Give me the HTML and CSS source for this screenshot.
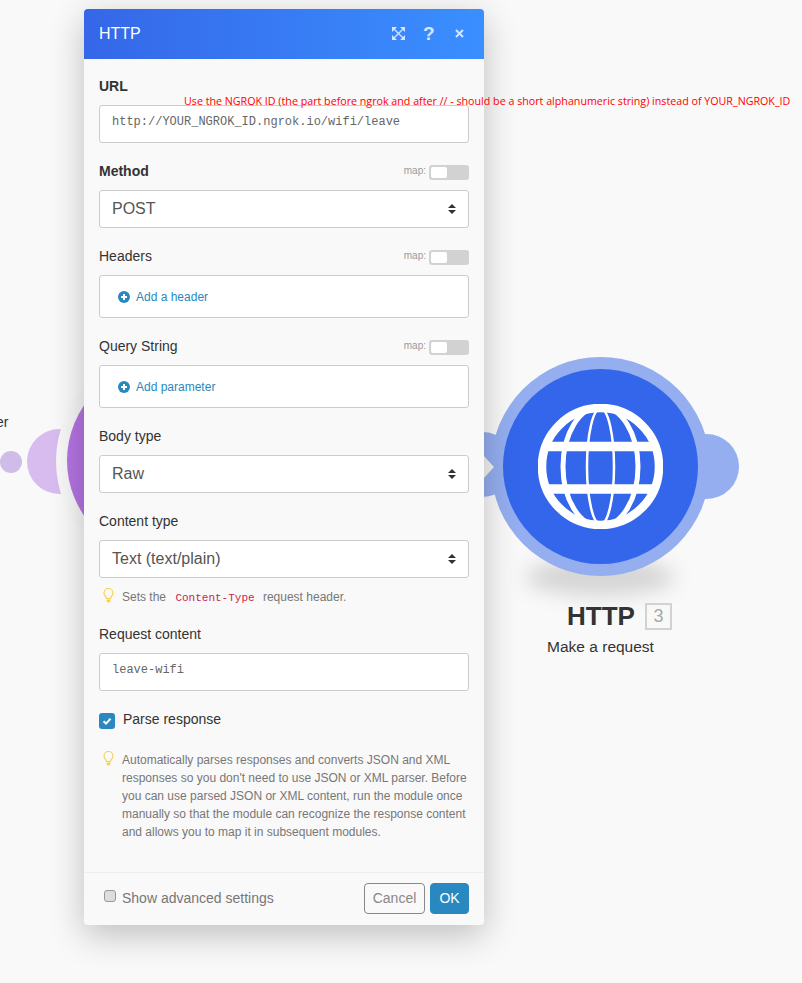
FILE: index.html
```html
<!DOCTYPE html>
<html lang="en">
<head>
<meta charset="utf-8">
<title>HTTP</title>
<link rel="stylesheet" href="styles.css">
</head>
<body>
<div class="canvas">
  <div class="node-label-cut">er</div>
  <div class="dot-purple"></div>
  <div class="lobe-purple"></div>
  <div class="ring-purple"></div>
  <div class="core-purple"></div>

  <div class="lobe-blue lobe-left"></div>
  <div class="lobe-blue lobe-right"></div>
  <div class="node-shadow"></div>
  <div class="ring-blue"></div>
  <div class="notch"></div>
  <div class="core-blue">
    <svg class="globe" viewBox="0 0 125 125" width="125" height="125" aria-hidden="true">
      <defs><clipPath id="globe-clip"><circle cx="62.5" cy="62.5" r="60"/></clipPath></defs>
      <g fill="none" stroke="#fff">
        <circle cx="62.5" cy="62.5" r="58.5" stroke-width="8.5"/>
        <g clip-path="url(#globe-clip)">
          <ellipse cx="62.5" cy="62.5" rx="37.5" ry="60" stroke-width="5"/>
          <ellipse cx="62.5" cy="62.5" rx="13.5" ry="58" stroke-width="2.5"/>
          <path d="M0 42.5H125" stroke-width="9.5"/>
          <path d="M0 85H125" stroke-width="9.5"/>
        </g>
      </g>
    </svg>
  </div>
  <div class="node-title">
    <span class="node-name">HTTP</span>
    <span class="node-id">3</span>
  </div>
  <div class="node-desc">Make a request</div>
</div>

<main class="modal">
  <header class="modal-head">
    <h1 class="modal-title">HTTP</h1>
    <div class="head-tools">
      <svg class="tool-expand" viewBox="0 0 13 13" width="13" height="13" aria-hidden="true">
        <path d="M2 2L11 11M11 2L2 11" stroke="#d6e6ff" stroke-width="1.3" fill="none"/>
        <path d="M0 0H5L0 5ZM13 0H8L13 5ZM0 13H5L0 8ZM13 13H8L13 8Z" fill="#d6e6ff"/>
      </svg>
      <span class="tool-help">?</span>
      <svg class="tool-close" viewBox="0 0 9 9" width="9" height="9" aria-hidden="true">
        <path d="M1 1L8 8M8 1L1 8" stroke="#d6e6ff" stroke-width="2" fill="none"/>
      </svg>
    </div>
  </header>

  <div class="modal-body">
    <section class="field">
      <div class="field-head"><label class="field-label strong">URL</label></div>
      <div class="control mono">http://YOUR_NGROK_ID.ngrok.io/wifi/leave</div>
    </section>

    <section class="field">
      <div class="field-head">
        <label class="field-label strong">Method</label>
        <span class="map"><span class="map-text">map:</span><span class="toggle"><span class="knob"></span></span></span>
      </div>
      <div class="control select"><span>POST</span>
        <svg class="updown" viewBox="0 0 8 10" width="8" height="10" aria-hidden="true"><path d="M4 0L8 4H0ZM4 10L0 6H8Z"/></svg>
      </div>
    </section>

    <section class="field">
      <div class="field-head">
        <label class="field-label">Headers</label>
        <span class="map"><span class="map-text">map:</span><span class="toggle"><span class="knob"></span></span></span>
      </div>
      <div class="control adder">
        <svg class="plus" viewBox="0 0 12 12" width="12" height="12" aria-hidden="true"><circle cx="6" cy="6" r="6" fill="#2a88c0"/><path d="M6 3V9M3 6H9" stroke="#fff" stroke-width="2"/></svg>
        <a class="add-link">Add a header</a>
      </div>
    </section>

    <section class="field">
      <div class="field-head">
        <label class="field-label">Query String</label>
        <span class="map"><span class="map-text">map:</span><span class="toggle"><span class="knob"></span></span></span>
      </div>
      <div class="control adder">
        <svg class="plus" viewBox="0 0 12 12" width="12" height="12" aria-hidden="true"><circle cx="6" cy="6" r="6" fill="#2a88c0"/><path d="M6 3V9M3 6H9" stroke="#fff" stroke-width="2"/></svg>
        <a class="add-link">Add parameter</a>
      </div>
    </section>

    <section class="field">
      <div class="field-head"><label class="field-label">Body type</label></div>
      <div class="control select"><span>Raw</span>
        <svg class="updown" viewBox="0 0 8 10" width="8" height="10" aria-hidden="true"><path d="M4 0L8 4H0ZM4 10L0 6H8Z"/></svg>
      </div>
    </section>

    <section class="field field-hinted">
      <div class="field-head"><label class="field-label">Content type</label></div>
      <div class="control select"><span>Text (text/plain)</span>
        <svg class="updown" viewBox="0 0 8 10" width="8" height="10" aria-hidden="true"><path d="M4 0L8 4H0ZM4 10L0 6H8Z"/></svg>
      </div>
      <div class="hint hint-inline">
        <svg class="bulb" viewBox="0 0 11 15" width="11" height="15" aria-hidden="true"><path d="M3.5 10.5C3.2 8.5 1 7.5 1 5A4.5 4.5 0 0 1 10 5C10 7.5 7.8 8.5 7.5 10.5Z" fill="none" stroke="#f8d24f" stroke-width="1.2"/><path d="M3.5 11.5H7.5V13L6.5 14.5H4.5L3.5 13Z" fill="#f8d24f"/></svg>
        <p class="hint-text">Sets the <code class="code">Content-Type</code> request header.</p>
      </div>
    </section>

    <section class="field">
      <div class="field-head"><label class="field-label">Request content</label></div>
      <div class="control mono mono-short">leave-wifi</div>
    </section>

    <div class="check-row">
      <span class="check-box">
        <svg viewBox="0 0 16 16" width="16" height="16" aria-hidden="true"><path d="M4.5 8.3L7 10.6L11.5 5.8" fill="none" stroke="#fff" stroke-width="2"/></svg>
      </span>
      <span class="check-label">Parse response</span>
    </div>

    <div class="hint hint-block">
      <svg class="bulb" viewBox="0 0 11 15" width="11" height="15" aria-hidden="true"><path d="M3.5 10.5C3.2 8.5 1 7.5 1 5A4.5 4.5 0 0 1 10 5C10 7.5 7.8 8.5 7.5 10.5Z" fill="none" stroke="#f8d24f" stroke-width="1.2"/><path d="M3.5 11.5H7.5V13L6.5 14.5H4.5L3.5 13Z" fill="#f8d24f"/></svg>
      <p class="hint-text">Automatically parses responses and converts JSON and XML responses so you don't need to use JSON or XML parser. Before you can use parsed JSON or XML content, run the module once manually so that the module can recognize the response content and allows you to map it in subsequent modules.</p>
    </div>
  </div>

  <footer class="modal-foot">
    <div class="advanced">
      <span class="adv-box"></span>
      <span class="adv-label">Show advanced settings</span>
    </div>
    <div class="foot-buttons">
      <button class="btn btn-cancel">Cancel</button>
      <button class="btn btn-ok">OK</button>
    </div>
  </footer>
</main>

<div class="note">Use the NGROK ID (the part before ngrok and after // - should be a short alphanumeric string) instead of YOUR_NGROK_ID</div>
</body>
</html>
```

FILE: styles.css
```css
* { box-sizing: border-box; }
html, body { margin: 0; padding: 0; }
body {
  width: 802px;
  height: 983px;
  overflow: hidden;
  position: relative;
  background: #f9f9f9;
  font-family: "Liberation Sans", Arial, sans-serif;
  color: #333;
  padding: 9px 0 0 84px;
}

/* free canvas */
.canvas { position: absolute; inset: 0; }
.canvas > div { position: absolute; }
.node-label-cut { left: -4px; top: 414px; font-size: 14px; line-height: 16px; color: #333; }
.dot-purple { left: 0; top: 451px; width: 22px; height: 22px; border-radius: 50%; background: #d0bce8; }
.lobe-purple { left: 27px; top: 429px; width: 65px; height: 65px; border-radius: 50%; background: #d8bcf0; }
.ring-purple { left: 56px; top: 352px; width: 218px; height: 218px; border-radius: 50%; background: #f7f7f7; }
.core-purple { left: 67px; top: 363px; width: 195px; height: 195px; border-radius: 50%; background: #b474e2; }

.lobe-blue { width: 65px; height: 65px; border-radius: 50%; background: #94aef0; }
.lobe-left { left: 450px; top: 432px; }
.lobe-right { left: 674px; top: 434px; }
.notch { left: 484px; top: 456px; width: 0; height: 0; border-left: 10px solid #f3f3f3; border-top: 11px solid transparent; border-bottom: 11px solid transparent; }
.node-shadow { left: 525px; top: 558px; width: 150px; height: 38px; border-radius: 50%; background: rgba(0,0,0,.14); filter: blur(10px); }
.ring-blue { left: 491px; top: 357px; width: 219px; height: 219px; border-radius: 50%; background: #94aef0; }
.core-blue { left: 503px; top: 369px; width: 195px; height: 195px; border-radius: 50%; background: #3366ea; display: flex; align-items: center; justify-content: center; }
.globe { display: block; }
.node-title { left: 500px; top: 600px; width: 201px; display: flex; justify-content: center; padding-left: 38px; align-items: center; gap: 10px; }
.node-name { font-size: 26px; line-height: 33px; font-weight: 700; color: #333; }
.node-id { width: 27px; height: 27px; border: 2px solid #d2d2d2; color: #a8a8a8; font-size: 18px; line-height: 23px; text-align: center; }
.node-desc { left: 500px; top: 638px; width: 201px; text-align: center; font-size: 15.5px; line-height: 18px; color: #333; }

/* modal */
.modal {
  position: relative;
  width: 400px;
  height: 916px;
  background: #f9f9f9;
  border-radius: 4px;
  box-shadow: 0 10px 35px rgba(0,0,0,.24);
  display: flex;
  flex-direction: column;
}
.modal-head {
  height: 50px;
  flex: none;
  padding: 0 15px;
  display: flex;
  align-items: center;
  justify-content: space-between;
  border-radius: 4px 4px 0 0;
  background: linear-gradient(90deg, #3567e8, #3a8fff);
}
.modal-title { margin: 0; font-size: 16px; font-weight: 400; color: #fff; line-height: 20px; }
.head-tools { display: flex; align-items: center; position: relative; top: -1px; padding-right: 4px; }
.tool-expand { margin-right: 18px; }
.tool-help { width: 10px; font-size: 19px; line-height: 20px; font-weight: 700; color: #d6e6ff; text-align: center; margin-right: 22px; position: relative; top: 1px; }
.tool-close { margin-right: 1px; }

.modal-body { flex: 1; padding: 17px 15px 0; }
.field { margin-bottom: 18px; }
.field-head { height: 20px; margin-bottom: 9px; display: flex; align-items: center; justify-content: space-between; }
.field-label { font-size: 14px; line-height: 20px; color: #333; }
.strong { font-weight: 700; }
.map { display: flex; align-items: center; gap: 3px; position: relative; top: 1px; }
.map-text { font-size: 10px; color: #999; line-height: 12px; position: relative; top: -1px; }
.toggle { width: 40px; height: 15px; border-radius: 3px; background: #d2d2d2; padding: 2px; display: block; }
.knob { display: block; width: 16px; height: 11px; border-radius: 2px; background: #fff; }

.control {
  height: 38px;
  background: #fff;
  border: 1px solid #ccc;
  border-radius: 3px;
  padding: 0 12px;
  display: flex;
  align-items: center;
  color: #555;
}
.mono { font-family: "Liberation Mono", monospace; font-size: 12px; line-height: 14px; align-items: flex-start; padding-top: 9px; color: #666; }
.select { font-size: 16px; justify-content: space-between; }
.updown { fill: #333; }
.adder { height: 43px; padding-left: 18px; gap: 6px; }
.plus { flex: none; }
.add-link { font-size: 12px; color: #2a88c0; }

.hint { display: flex; gap: 8px; padding-left: 4px; }
.hint .bulb { flex: none; }
.hint-text { margin: 0; font-size: 12px; line-height: 18px; color: #777; }
.field-hinted { margin-bottom: 17px; }
.hint-inline { margin-top: 10px; }
.code { font-family: "Liberation Mono", monospace; font-size: 11px; color: #c7254e; padding: 0 5px 0 6px; }
.check-row { display: flex; align-items: flex-start; gap: 8px; height: 24px; }
.check-box { width: 16px; height: 16px; margin-top: 4px; border-radius: 3px; background: #2a88c0; display: block; }
.check-box svg { display: block; }
.check-label { font-size: 14px; line-height: 18px; color: #333; margin-top: 1px; }
.hint-block { margin-top: 18px; }

.modal-foot {
  flex: none;
  height: 53px;
  border-top: 1px solid #eee;
  padding: 0 15px 0 20px;
  display: flex;
  align-items: center;
  justify-content: space-between;
}
.advanced { display: flex; align-items: center; gap: 6px; position: relative; top: -1px; }
.adv-box { width: 12px; height: 12px; border: 1px solid #999; border-radius: 3px; background: #ddd; display: block; position: relative; top: -2px; }
.adv-label { font-size: 14px; color: #777; }
.foot-buttons { display: flex; gap: 5px; position: relative; top: -1px; }
.btn { height: 31px; border-radius: 4px; font-family: inherit; font-size: 14px; padding: 0; margin: 0; }
.btn-cancel { width: 61px; background: transparent; border: 1px solid #888; color: #888; }
.btn-ok { width: 39px; background: #2a88c0; border: 1px solid #2a88c0; color: #fff; }

.note {
  position: absolute;
  left: 184px;
  top: 94px;
  white-space: nowrap;
  font-family: "Open Sans", sans-serif;
  font-size: 10.7px;
  line-height: 14px;
  color: #f00;
}
```
